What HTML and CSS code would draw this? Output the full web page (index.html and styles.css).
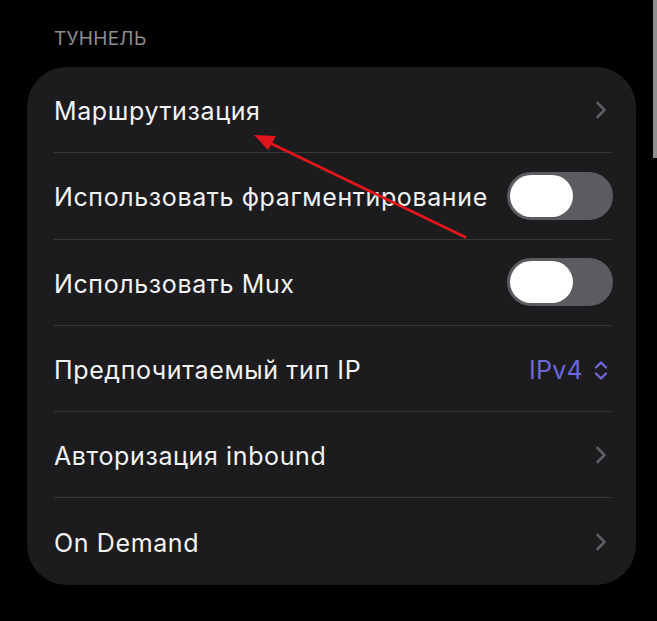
FILE: index.html
```html
<!DOCTYPE html>
<html lang="ru">
<head>
<meta charset="utf-8">
<link rel="stylesheet" href="styles.css">
</head>
<body>
<div class="screen">
  <div class="section-title">ТУННЕЛЬ</div>
  <div class="card">
    <div class="row">
      <span class="label">Маршрутизация</span>
      <svg class="chev" width="12" height="18" viewBox="0 0 12 18"><path d="M2.5 2 L9.5 9 L2.5 16" fill="none" stroke="#5d5d62" stroke-width="2.6" stroke-linecap="round" stroke-linejoin="round"/></svg>
    </div>
    <div class="row">
      <span class="label">Использовать фрагментирование</span>
      <span class="toggle"><span class="knob"></span></span>
    </div>
    <div class="row">
      <span class="label">Использовать Mux</span>
      <span class="toggle"><span class="knob"></span></span>
    </div>
    <div class="row">
      <span class="label">Предпочитаемый тип IP</span>
      <span class="value">IPv4
        <svg class="updown" width="16" height="21" viewBox="0 0 16 21"><path d="M3 7.5 L8 2.5 L13 7.5 M3 13.5 L8 18.5 L13 13.5" fill="none" stroke="#6d68d8" stroke-width="2.4" stroke-linecap="round" stroke-linejoin="round"/></svg>
      </span>
    </div>
    <div class="row">
      <span class="label">Авторизация inbound</span>
      <svg class="chev" width="12" height="18" viewBox="0 0 12 18"><path d="M2.5 2 L9.5 9 L2.5 16" fill="none" stroke="#5d5d62" stroke-width="2.6" stroke-linecap="round" stroke-linejoin="round"/></svg>
    </div>
    <div class="row">
      <span class="label">On Demand</span>
      <svg class="chev" width="12" height="18" viewBox="0 0 12 18"><path d="M2.5 2 L9.5 9 L2.5 16" fill="none" stroke="#5d5d62" stroke-width="2.6" stroke-linecap="round" stroke-linejoin="round"/></svg>
    </div>
  </div>
  <div class="scrollbar"></div>
  <svg class="annotation" width="657" height="621" viewBox="0 0 657 621">
    <line x1="465" y1="237" x2="270" y2="143" stroke="#e0161c" stroke-width="3" stroke-linecap="round"/>
    <path d="M254 135 L276 136 L268 150 Z" fill="#e0161c"/>
  </svg>
</div>
</body>
</html>
```
FILE: styles.css
```css
html, body {
  margin: 0;
  padding: 0;
  background: #000;
}
body {
  font-family: Inter, "Noto Sans", "Liberation Sans", sans-serif;
  color: #fff;
}
.screen {
  position: relative;
  width: 657px;
  height: 621px;
  overflow: hidden;
  padding: 27px 21px 0 27px;
  box-sizing: border-box;
}
.section-title {
  padding-left: 27px;
  font-size: 19px;
  letter-spacing: 0.3px;
  color: #8d8d93;
  line-height: 24px;
  height: 40px;
}
.card {
  background: #1c1c1e;
  border-radius: 40px;
  display: flex;
  flex-direction: column;
}
.row {
  height: 86.3px;
  display: flex;
  align-items: center;
  justify-content: space-between;
  margin: 0 25px 0 27px;
  border-bottom: 1.5px solid #38383b;
  box-sizing: border-box;
}
.row:last-child {
  border-bottom: none;
}
.label {
  font-size: 25px;
  letter-spacing: 0.62px;
  color: #f4f4f4;
  padding-top: 3px;
}
.chev {
  margin-right: 4px;
}
.toggle {
  width: 106px;
  height: 48px;
  border-radius: 24px;
  background: #5b5b60;
  display: flex;
  align-items: center;
  padding-left: 3px;
  box-sizing: border-box;
  margin-right: -2px;
}
.knob {
  width: 63px;
  height: 42px;
  border-radius: 21px;
  background: #fff;
}
.value {
  display: flex;
  align-items: center;
  gap: 10px;
  font-size: 25px;
  letter-spacing: 0.3px;
  color: #6d68d8;
  margin-right: 2px;
  padding-top: 3px;
}
.scrollbar {
  position: absolute;
  right: 0;
  top: 0;
  width: 4px;
  height: 158px;
  background: #8e8e8e;
}
.annotation {
  position: absolute;
  left: 0;
  top: 0;
  pointer-events: none;
}
```
